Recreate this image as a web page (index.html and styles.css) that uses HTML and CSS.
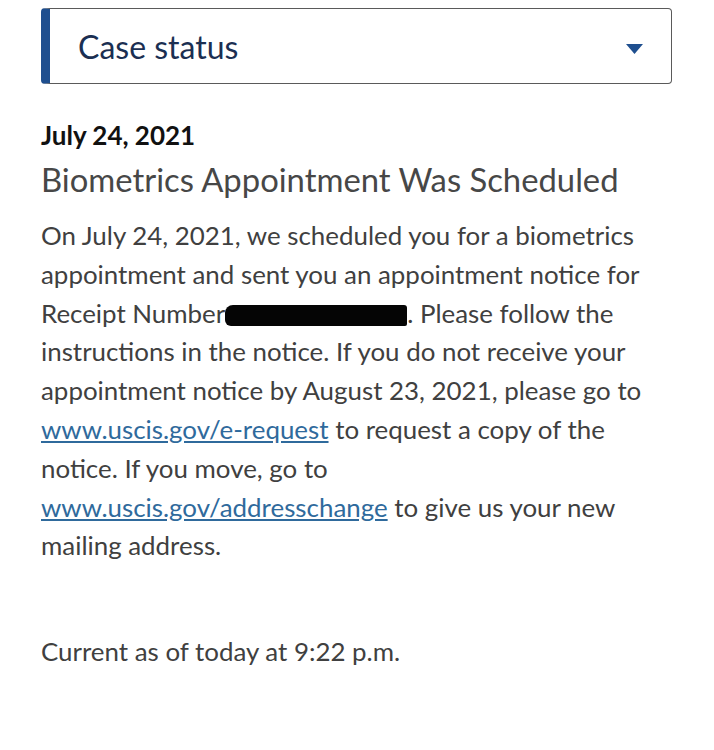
FILE: index.html
```html
<!DOCTYPE html>
<html lang="en">
<head>
<meta charset="utf-8">
<title>Case status</title>
<link rel="stylesheet" href="styles.css">
</head>
<body>
<main class="page">
  <div class="select">
    <span class="select-label">Case status</span>
    <svg class="caret" width="17" height="10" viewBox="0 0 17 10"><path d="M0 0 H17 L8.5 10 Z" fill="#1f4f8f"/></svg>
  </div>
  <h2 class="date">July 24, 2021</h2>
  <h1 class="title">Biometrics Appointment Was Scheduled</h1>
  <p class="body">On July 24, 2021, we scheduled you for a biometrics appointment and sent you an appointment notice for Receipt Number<span class="redact"></span>. Please follow the instructions in the notice. If you do not receive your appointment notice by August 23, 2021, please go to <a href="#">www.uscis.gov/e-request</a> to request a copy of the notice. If you move, go to <a href="#">www.uscis.gov/addresschange</a> to give us your new mailing address.</p>
  <p class="current">Current as of today at 9:22 p.m.</p>
</main>
</body>
</html>
```
FILE: styles.css
```css
html, body {
  margin: 0;
  padding: 0;
  background: #ffffff;
}
.page {
  width: 631px;
  margin-left: 41px;
  padding-top: 8px;
  font-family: Lato, "Open Sans", sans-serif;
}
.select {
  box-sizing: border-box;
  height: 76px;
  border: 1.5px solid #5a5a5a;
  border-left: 9px solid #1f4f8f;
  border-radius: 4px;
  display: flex;
  align-items: center;
  justify-content: space-between;
  padding: 0 28px 0 28px;
}
.select-label {
  font-size: 32px;
  color: #1b2f52;
}
.caret {
  margin-top: 6px;
}
.date {
  margin: 36px 0 0 0;
  font-size: 26px;
  font-weight: 700;
  color: #111;
  line-height: 30px;
}
.title {
  margin: 11px 0 0 0;
  font-size: 32.8px;
  font-weight: 400;
  color: #474747;
  line-height: 38px;
}
.body {
  margin: 17px 0 0 0;
  font-size: 25.9px;
  line-height: 38.8px;
  color: #404040;
}
.body a {
  color: #2f6a9c;
  text-decoration: underline;
  text-underline-offset: 2px;
}
.redact {
  display: inline-block;
  width: 182px;
  height: 21px;
  background: #050505;
  vertical-align: -3px;
  border-radius: 8px 3px 2px 6px;
}
.current {
  margin: 67px 0 0 0;
  font-size: 25.9px;
  line-height: 38px;
  color: #404040;
}
```
